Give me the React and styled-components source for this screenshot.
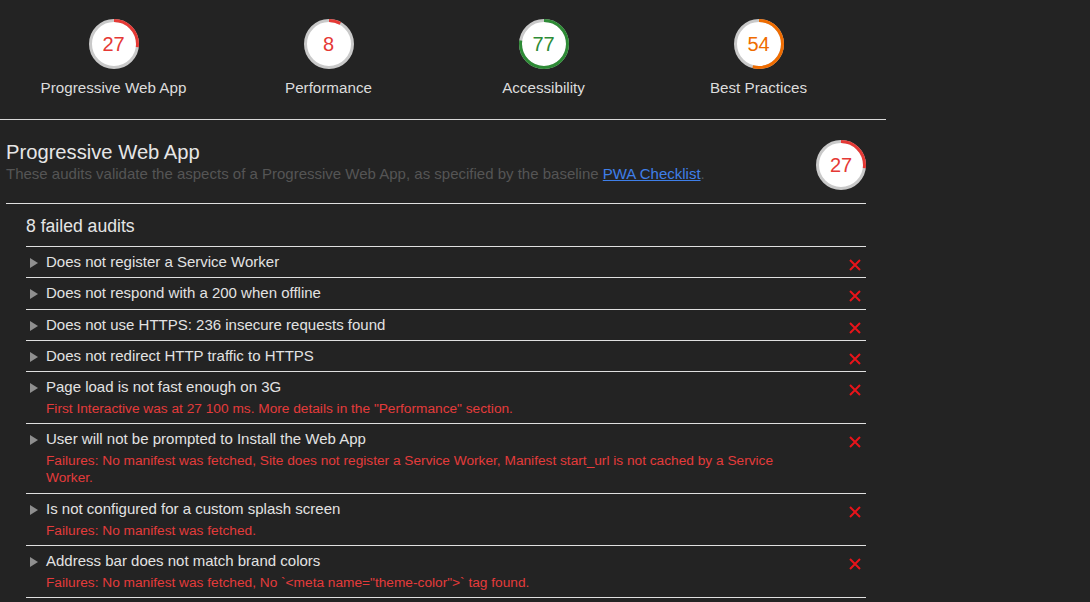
import React from "react";
import styled, { createGlobalStyle } from "styled-components";

const GlobalStyle = createGlobalStyle`
  body {
    margin: 0;
    background: #232323;
    font-family: "Liberation Sans", Arial, sans-serif;
    color: #e0e0e0;
  }
`;

const Page = styled.div`
  width: 886px;
`;

const Header = styled.header`
  display: flex;
  padding: 19px 0 0 6px;
  height: 100px;
  border-bottom: 1px solid #d8d8d8;
`;

const ScoreCol = styled.div`
  width: 215px;
  display: flex;
  flex-direction: column;
  align-items: center;
`;

const ScoreLabel = styled.div`
  margin-top: 10px;
  font-size: 15.2px;
  line-height: 18px;
  color: #dcdcdc;
`;

const GaugeWrap = styled.div`
  position: relative;
  width: 50px;
  height: 50px;
  flex-shrink: 0;
`;

const GaugeValue = styled.span`
  position: absolute;
  inset: 0;
  display: flex;
  align-items: center;
  justify-content: center;
  font-size: 20px;
  color: ${(p) => p.$color};
`;

const Section = styled.section`
  padding: 0 20px 0 6px;
`;

const SectionHead = styled.div`
  display: flex;
  justify-content: space-between;
  align-items: flex-start;
  padding-top: 20px;
  height: 63px;
  border-bottom: 1px solid #e0e0e0;
`;

const SectionTitle = styled.h2`
  margin: 0;
  font-size: 20.2px;
  font-weight: normal;
  line-height: 24px;
  color: #e6e6e6;
`;

const SectionDesc = styled.p`
  margin: 1px 0 0;
  font-size: 15px;
  line-height: 18px;
  color: #555;
`;

const Link = styled.a`
  color: #3f7fe8;
  text-decoration: underline;
`;

const Group = styled.div`
  padding-left: 20px;
`;

const GroupTitle = styled.div`
  font-size: 17.6px;
  line-height: 20px;
  padding: 12px 0 10px;
  color: #e6e6e6;
  border-bottom: 1px solid #e0e0e0;
`;

const AuditRow = styled.div`
  display: flex;
  align-items: flex-start;
  padding: 6px 5px 6.25px 4px;
  line-height: 18px;
  border-bottom: 1px solid #e0e0e0;
`;

const Arrow = styled.span`
  display: block;
  width: 0;
  height: 0;
  margin: 5px 8px 0 0;
  border-top: 5px solid transparent;
  border-bottom: 5px solid transparent;
  border-left: 8px solid #8f8f8f;
  flex-shrink: 0;
`;

const AuditBody = styled.div`
  flex: 1;
  padding-right: 60px;
`;

const AuditTitle = styled.div`
  font-size: 15px;
  line-height: 18px;
  color: #e2e2e2;
`;

const AuditDesc = styled.div`
  margin-top: 4px;
  font-size: 13.7px;
  line-height: 17px;
  color: #e33b3b;
`;

const FailMark = styled.svg`
  display: block;
  margin-top: 6px;
  flex-shrink: 0;
`;

const Gauge = ({ score, size = 50 }) => {
  const color = score < 45 ? "#e53935" : score < 75 ? "#ef6c00" : "#2e8b36";
  const r = 23.5;
  const c = 2 * Math.PI * r;
  return (
    <GaugeWrap>
      <svg width={size} height={size} viewBox="0 0 50 50">
        <circle cx="25" cy="25" r="24" fill="#fff" />
        <circle cx="25" cy="25" r={r} fill="none" stroke="#c9c9c9" strokeWidth="3" />
        <circle
          cx="25"
          cy="25"
          r={r}
          fill="none"
          stroke={color}
          strokeWidth="3"
          strokeDasharray={`${(c * score) / 100} ${c}`}
          transform="rotate(-90 25 25)"
        />
      </svg>
      <GaugeValue $color={color}>{score}</GaugeValue>
    </GaugeWrap>
  );
};

const scores = [
  { label: "Progressive Web App", score: 27 },
  { label: "Performance", score: 8 },
  { label: "Accessibility", score: 77 },
  { label: "Best Practices", score: 54 },
];

const audits = [
  { title: "Does not register a Service Worker" },
  { title: "Does not respond with a 200 when offline" },
  { title: "Does not use HTTPS: 236 insecure requests found" },
  { title: "Does not redirect HTTP traffic to HTTPS" },
  {
    title: "Page load is not fast enough on 3G",
    desc: 'First Interactive was at 27 100 ms. More details in the "Performance" section.',
  },
  {
    title: "User will not be prompted to Install the Web App",
    desc: "Failures: No manifest was fetched, Site does not register a Service Worker, Manifest start_url is not cached by a Service Worker.",
  },
  {
    title: "Is not configured for a custom splash screen",
    desc: "Failures: No manifest was fetched.",
  },
  {
    title: "Address bar does not match brand colors",
    desc: 'Failures: No manifest was fetched, No `<meta name="theme-color">` tag found.',
  },
];

const Cross = () => (
  <FailMark width="12" height="12" viewBox="0 0 12 12">
    <path d="M1 1 L11 11 M11 1 L1 11" stroke="#e8141a" strokeWidth="2" />
  </FailMark>
);

const App = () => (
  <Page>
    <GlobalStyle />
    <Header>
      {scores.map((s) => (
        <ScoreCol key={s.label}>
          <Gauge score={s.score} />
          <ScoreLabel>{s.label}</ScoreLabel>
        </ScoreCol>
      ))}
    </Header>
    <Section>
      <SectionHead>
        <div>
          <SectionTitle>Progressive Web App</SectionTitle>
          <SectionDesc>
            These audits validate the aspects of a Progressive Web App, as specified by the baseline{" "}
            <Link href="#">PWA Checklist</Link>.
          </SectionDesc>
        </div>
        <Gauge score={27} />
      </SectionHead>
      <Group>
        <GroupTitle>8 failed audits</GroupTitle>
        {audits.map((a) => (
          <AuditRow key={a.title}>
            <Arrow />
            <AuditBody>
              <AuditTitle>{a.title}</AuditTitle>
              {a.desc && <AuditDesc>{a.desc}</AuditDesc>}
            </AuditBody>
            <Cross />
          </AuditRow>
        ))}
      </Group>
    </Section>
  </Page>
);

export default App;
